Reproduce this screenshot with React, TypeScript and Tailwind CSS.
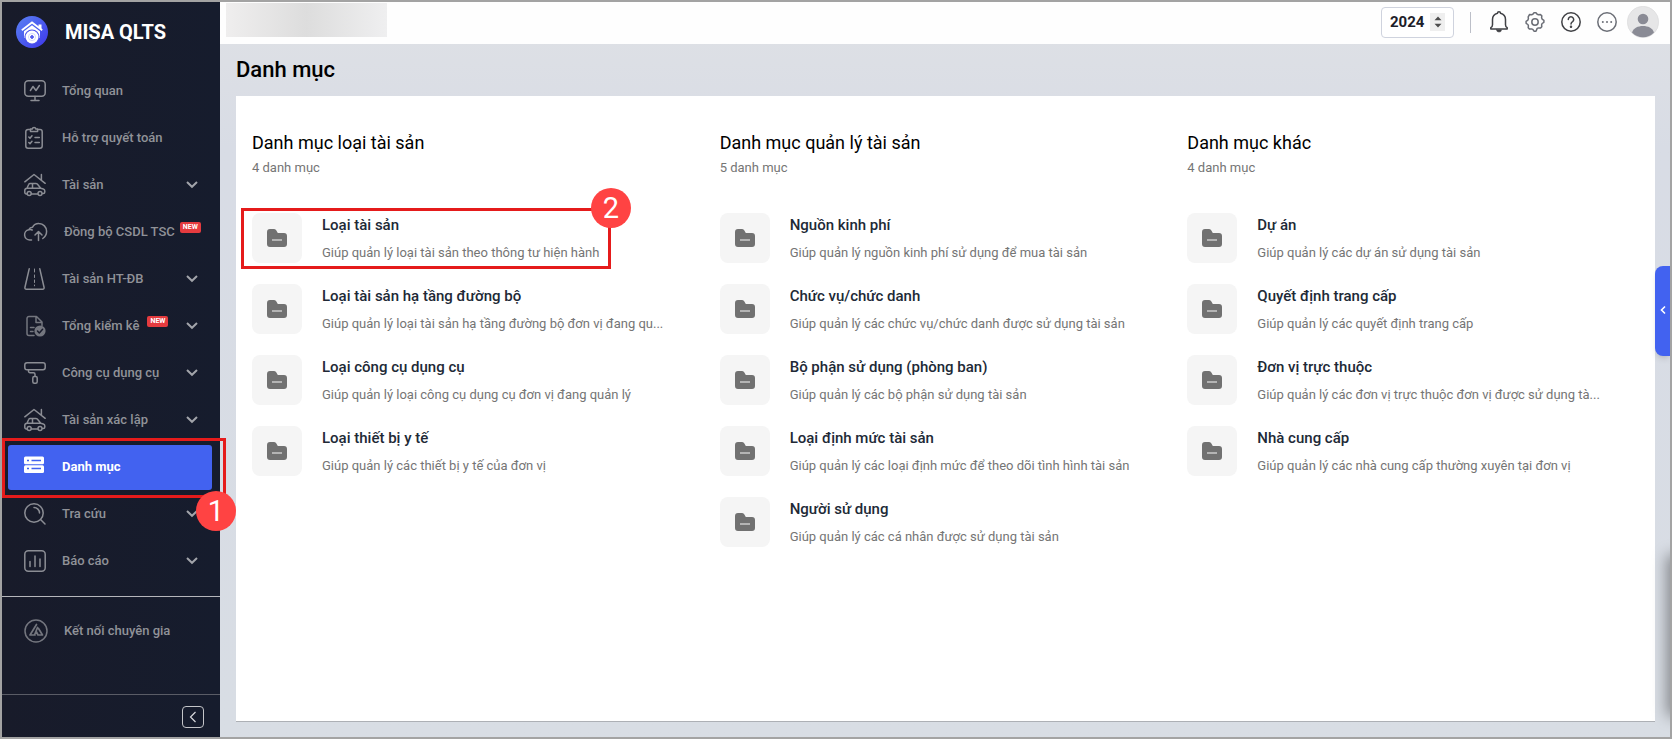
import { useState } from 'react';
import type { ReactNode } from 'react';

const strokeProps = {
    fill: 'none',
    stroke: 'currentColor',
    strokeWidth: 1.5,
    strokeLinecap: 'round' as const,
    strokeLinejoin: 'round' as const,
};

const MonitorIcon = () => (
    <svg viewBox="0 0 24 24" className="w-6 h-6" {...strokeProps}>
        <rect x="1.8" y="1.8" width="20.4" height="15.4" rx="3.5" />
        <path d="M12 17.5v3.6M8 21.4h8M7.4 11.5l2.6-4 3 4 3.4-5" />
    </svg>
);

const ClipboardIcon = () => (
    <svg viewBox="0 0 24 24" className="w-6 h-6" {...strokeProps}>
        <path d="M7.5 3.5H5A2.2 2.2 0 0 0 2.8 5.7V20A2.2 2.2 0 0 0 5 22.2h12A2.2 2.2 0 0 0 19.2 20V5.7A2.2 2.2 0 0 0 17 3.5h-2.5" />
        <path d="M7.5 5.5v-2.5h1.700a1.900 1.900 0 0 1 3.700 0h1.700v2.500z" />
        <path d="M5.800 11l1.200 1.200 2-2.400M5.800 16.500l1.200 1.200 2-2.400M12 11.500h4.300M12 16.500h4.300" />
    </svg>
);

const HouseCarIcon = () => (
    <svg viewBox="0 0 24 24" className="w-6 h-6" {...strokeProps}>
        <path d="M1.800 8.800L11 1.500l11.200 8.800M18.400 1.500v5.500" />
        <path d="M3.800 15.500l2-4.200a1.500 1.500 0 0 1 1.400-.9h5.600a2 2 0 0 1 1.500.7l3.500 4.200 2.500.6a2 2 0 0 1 1.500 2v1.200a1.500 1.500 0 0 1-1.500 1.500h-.6M3.800 21h-.5a1.500 1.500 0 0 1-1.500-1.500v-2.200a2 2 0 0 1 2-2h13.800M9.500 10.600v4.500M8.500 21h6" />
        <circle cx="6.200" cy="20.600" r="2" />
        <circle cx="17" cy="20.600" r="2" />
    </svg>
);

const CloudIcon = () => (
    <svg viewBox="0 0 26 26" className="w-[26px] h-[26px]" {...strokeProps}>
        <path d="M8.500 21H7a5.200 5.200 0 0 1-1.200-10.300 4.600 4.600 0 0 1 3.800-2.500A6.800 6.800 0 0 1 16 4.500a7.800 7.800 0 0 1 7.600 7.800c0 3.200-1.600 5.600-3.800 7.200M5.800 10.700a4 4 0 0 1 3.400.3" />
        <path d="M15.500 21.500v-8.500M12 16l3.500-3.500L19 16" />
    </svg>
);

const RoadIcon = () => (
    <svg viewBox="0 0 24 24" className="w-6 h-6" {...strokeProps}>
        <path d="M6.200 1.800L1.900 20.500a1.400 1.400 0 0 0 1.400 1.700h16.400a1.400 1.400 0 0 0 1.400-1.700L16.800 1.800" />
        <path d="M11.500 2v3M11.500 8v2.500M11.500 13v2.500M11.500 18v.800" strokeWidth="1" />
    </svg>
);

const FileCheckIcon = () => (
    <svg viewBox="0 0 24 24" className="w-6 h-6 opacity-80" {...strokeProps}>
        <path d="M11 21.500H6A2 2 0 0 1 4 19.500v-15A2 2 0 0 1 6 2.500h7.500L19 8v3.500M13 2.500V8.500h6M7.500 13.500h3.500M7.500 17.500h2.500" />
        <circle cx="17" cy="17" r="5.600" fill="currentColor" stroke="none" />
        <path d="M14.500 17l1.800 1.900 3.300-3.700" stroke="#181b2b" />
    </svg>
);

const RollerIcon = () => (
    <svg viewBox="0 0 24 24" className="w-6 h-6" {...strokeProps}>
        <rect x="1.800" y="1.800" width="20.400" height="7" rx="2.200" />
        <path d="M5.500 8.800v1.400a1.500 1.500 0 0 0 1.500 1.500h3.500a1.500 1.500 0 0 1 1.500 1.500v2" />
        <rect x="9.800" y="15.500" width="4.400" height="6.800" rx="1.500" />
    </svg>
);

const ServerIcon = () => (
    <svg viewBox="0 0 24 24" className="w-6 h-6">
        <rect x="1" y="1.500" width="20" height="7.800" rx="1.500" fill="#fff" />
        <rect x="1" y="10.300" width="20" height="7.800" rx="1.500" fill="#fff" />
        <path d="M4 5.500h2M8.500 5.500h9.500M4 13.500h2M8.500 13.500h9.500" stroke="#4262f0" strokeWidth="1.300" />
    </svg>
);

const LookupIcon = () => (
    <svg viewBox="0 0 24 24" className="w-6 h-6" {...strokeProps}>
        <circle cx="11" cy="11" r="9.200" />
        <path d="M17.800 17.800L22 22M11 5.500a5.500 5.500 0 0 1 5.500 5.500" />
    </svg>
);

const ReportIcon = () => (
    <svg viewBox="0 0 24 24" className="w-6 h-6" {...strokeProps}>
        <rect x="1.800" y="1.800" width="20.400" height="20.400" rx="3.500" />
        <path d="M7 12.500v5M12 7v10.500M17 10v7.500" />
    </svg>
);

const ExpertIcon = () => (
    <svg viewBox="0 0 26 26" className="w-[26px] h-[26px] opacity-80" {...strokeProps}>
        <circle cx="13" cy="13" r="11" />
        <path d="M13.500 6.500L7 17h5M14.500 9.500l-2.800 7M15.500 10.500l4 6.500h-4.500l-1.500-3" strokeWidth="1.700" />
    </svg>
);

const ChevronDown = () => (
    <svg viewBox="0 0 12 12" className="w-3 h-3 ml-auto" fill="none" stroke="#a2a4aa" strokeWidth="2">
        <path d="M1 3l5 4.800 5-4.800" />
    </svg>
);

const FolderIcon = () => (
    <svg viewBox="0 0 20 18" className="w-5 h-[18px]">
        <path d="M0 3a3 3 0 0 1 3-3h3.700a3 3 0 0 1 2.500 1.300L10.800 4H17a3 3 0 0 1 3 3v8a3 3 0 0 1-3 3H3a3 3 0 0 1-3-3z" fill="#717171" />
        <path d="M5 11h10" stroke="#b4b4b4" strokeWidth="2" />
    </svg>
);

const Logo = () => (
    <svg viewBox="0 0 32 32" className="w-8 h-8">
        <defs>
            <linearGradient id="logo-bg" x1="0" y1="0" x2="1" y2="1">
                <stop offset="0" stopColor="#5a82f4" />
                <stop offset="1" stopColor="#3d36ea" />
            </linearGradient>
        </defs>
        <circle cx="16" cy="16" r="16" fill="url(#logo-bg)" />
        <path d="M5.800 14.300L16 6.500l10.200 7.800" fill="none" stroke="#fff" strokeWidth="1.800" />
        <path d="M22.500 8.500h3v5l-3-2z" fill="#fff" />
        <path d="M8 15.300L16 9.300l8 6V22H8z" fill="#fff" />
        <circle cx="16" cy="21" r="7.600" fill="#4b52ee" />
        <circle cx="16" cy="21" r="6.500" fill="#fff" />
        <circle cx="16" cy="21" r="3.600" fill="none" stroke="#aab4f8" strokeWidth="0.500" />
        <path d="M16 19v4M14 21h4" stroke="#4b52ee" strokeWidth="1.600" />
    </svg>
);

type MenuItem = {
    label: string;
    icon: ReactNode;
    expand?: boolean;
    isNew?: boolean;
};

const menu: MenuItem[] = [
    { label: 'Tổng quan', icon: <MonitorIcon /> },
    { label: 'Hỗ trợ quyết toán', icon: <ClipboardIcon /> },
    { label: 'Tài sản', icon: <HouseCarIcon />, expand: true },
    { label: 'Đồng bộ CSDL TSC', icon: <CloudIcon />, isNew: true },
    { label: 'Tài sản HT-ĐB', icon: <RoadIcon />, expand: true },
    { label: 'Tổng kiểm kê', icon: <FileCheckIcon />, expand: true, isNew: true },
    { label: 'Công cụ dụng cụ', icon: <RollerIcon />, expand: true },
    { label: 'Tài sản xác lập', icon: <HouseCarIcon />, expand: true },
    { label: 'Danh mục', icon: <ServerIcon /> },
    { label: 'Tra cứu', icon: <LookupIcon />, expand: true },
    { label: 'Báo cáo', icon: <ReportIcon />, expand: true },
];

const groups = [
    {
        title: 'Danh mục loại tài sản',
        items: [
            { name: 'Loại tài sản', desc: 'Giúp quản lý loại tài sản theo thông tư hiện hành' },
            { name: 'Loại tài sản hạ tầng đường bộ', desc: 'Giúp quản lý loại tài sản hạ tầng đường bộ đơn vị đang qu...' },
            { name: 'Loại công cụ dụng cụ', desc: 'Giúp quản lý loại công cụ dụng cụ đơn vị đang quản lý' },
            { name: 'Loại thiết bị y tế', desc: 'Giúp quản lý các thiết bị y tế của đơn vị' },
        ],
    },
    {
        title: 'Danh mục quản lý tài sản',
        items: [
            { name: 'Nguồn kinh phí', desc: 'Giúp quản lý nguồn kinh phí sử dụng để mua tài sản' },
            { name: 'Chức vụ/chức danh', desc: 'Giúp quản lý các chức vụ/chức danh được sử dụng tài sản' },
            { name: 'Bộ phận sử dụng (phòng ban)', desc: 'Giúp quản lý các bộ phận sử dụng tài sản' },
            { name: 'Loại định mức tài sản', desc: 'Giúp quản lý các loại định mức để theo dõi tình hình tài sản' },
            { name: 'Người sử dụng', desc: 'Giúp quản lý các cá nhân được sử dụng tài sản' },
        ],
    },
    {
        title: 'Danh mục khác',
        items: [
            { name: 'Dự án', desc: 'Giúp quản lý các dự án sử dụng tài sản' },
            { name: 'Quyết định trang cấp', desc: 'Giúp quản lý các quyết định trang cấp' },
            { name: 'Đơn vị trực thuộc', desc: 'Giúp quản lý các đơn vị trực thuộc đơn vị được sử dụng tà...' },
            { name: 'Nhà cung cấp', desc: 'Giúp quản lý các nhà cung cấp thường xuyên tại đơn vị' },
        ],
    },
];

const StepBadge = ({ step, className }: { step: number; className: string }) => (
    <span className={`absolute z-10 flex w-10 h-10 items-center justify-center rounded-full bg-[#ff4343] text-[29px] leading-none font-normal text-white ${className}`}>
        {step}
    </span>
);

function Sidebar() {
    const [active, setActive] = useState('Danh mục');

    return (
        <aside className="relative z-10 flex w-[218px] shrink-0 flex-col bg-linear-to-r from-[#181b2a] to-[#161c2d] text-[13px] font-medium text-[#909298]">
            <div className="flex h-[60px] items-center pl-[14px]">
                <Logo />
                <span className="ml-[17px] text-xl font-bold text-white">MISA QLTS</span>
            </div>
            <ul className="pt-[6px] pb-[11px]">
                {menu.map((m) => (
                    <li key={m.label} className="relative h-[47px] pt-px pb-px pl-[6px] pr-2">
                        <button
                            onClick={() => setActive(m.label)}
                            className={`flex h-full w-full items-center rounded-[3px] pl-[15px] pr-[14px] pb-px ${active === m.label ? 'bg-[#4262f0] font-bold text-white' : ''}`}
                        >
                            <span className="text-[#8b8d94]">{m.icon}</span>
                            <span className="ml-[15px] whitespace-nowrap">{m.label}</span>
                            {m.isNew && (
                                <span className={`mt-3 flex h-[11px] w-[21px] shrink-0 items-center justify-center self-start rounded-[2px] bg-[#e53b3f] text-[7px] font-bold text-white ${m.expand ? 'ml-2' : 'ml-[5px]'}`}>
                                    NEW
                                </span>
                            )}
                            {m.expand && <ChevronDown />}
                        </button>
                        {m.label === 'Danh mục' && (
                            <>
                                <span className="pointer-events-none absolute -top-[6px] -right-[6px] -bottom-[7px] left-0 border-[3px] border-[#e51b1b]" />
                                <StepBadge step={1} className="-right-4 -bottom-10" />
                            </>
                        )}
                    </li>
                ))}
            </ul>
            <div className="border-t border-[#b5b6bb] pt-[10px]">
                <button className="flex h-[47px] w-full items-center pl-[21px]">
                    <span className="text-[#8b8d94]"><ExpertIcon /></span>
                    <span className="ml-[15px]">Kết nối chuyên gia</span>
                </button>
            </div>
            <div className="mt-auto flex h-[43px] items-center justify-end border-t border-[#5a5c66] pt-[2px] pr-4">
                <button aria-label="Thu gọn" className="flex w-[22px] h-[22px] items-center justify-center rounded-[4px] border border-[#c4c5c9] text-[#d8d8dc]">
                    <svg viewBox="0 0 10 12" className="w-[10px] h-3" fill="none" stroke="currentColor" strokeWidth="1.200">
                        <path d="M7.500 1L2.500 6l5 5" />
                    </svg>
                </button>
            </div>
        </aside>
    );
}

function Header() {
    const [year, setYear] = useState('2024');

    return (
        <header className="flex h-[42px] items-center bg-[#fefefe] pb-[2px] pl-[6px] pr-[11px]">
            <div className="mb-1 h-[34px] w-[161px] bg-linear-to-r from-[#efeeee] via-[#dddddd] to-[#efeff0]" />
            <div className="ml-auto flex h-[31px] w-[73px] items-center rounded-[4px] border border-[#cfd3de] bg-white pl-2 pr-2">
                <input
                    aria-label="Năm"
                    value={year}
                    onChange={(e) => setYear(e.target.value)}
                    className="w-10 text-[15px] font-bold text-[#1c2029] outline-none"
                />
                <span className="flex h-[18px] w-[15px] shrink-0 items-center justify-center bg-[#efefef]">
                    <svg viewBox="0 0 8 12" className="w-2 h-3" fill="#4d4d4d">
                        <path d="M0.500 4.300L4 0.500l3.500 3.800zM0.500 7.700L4 11.500l3.500-3.800z" />
                    </svg>
                </span>
            </div>
            <div className="ml-4 h-[21px] w-px bg-[#bcbfc8]" />
            <div className="ml-4 flex items-center gap-3 text-[#6b6e76]">
                <button aria-label="Thông báo" className="text-[#404145]">
                    <svg viewBox="0 0 24 24" className="w-6 h-6" {...strokeProps}>
                        <path d="M3.800 19h16.400v-1.300c-1.300-.7-1.700-1.700-1.700-3V9.500a6.500 6.500 0 0 0-5-6.300 1.500 1.500 0 0 0-3 0 6.500 6.500 0 0 0-5 6.300v5.200c0 1.300-.4 2.300-1.700 3z" />
                        <path d="M9.500 19.800h5a2.500 2.300 0 0 1-5 0z" fill="currentColor" strokeWidth="0.500" />
                    </svg>
                </button>
                <button aria-label="Thiết lập">
                    <svg viewBox="0 0 24 24" className="w-6 h-6" {...strokeProps}>
                        <path d="M9.800 4.300L11 2.800h2l1.200 1.500 1.300.5 1.900-.3 1.400 1.400-.2 1.900.5 1.300 1.800 1.200v2l-1.800 1.200-.5 1.300.2 1.900-1.400 1.400-1.900-.2-1.300.5L13 21.200h-2l-1.200-1.800-1.300-.5-1.900.2-1.400-1.400.2-1.900-.5-1.300-1.800-1.200v-2l1.800-1.200.5-1.300-.2-1.900L6.600 4.500l1.900.3z" />
                        <circle cx="12" cy="12" r="3.200" />
                    </svg>
                </button>
                <button aria-label="Trợ giúp" className="text-[#404145]">
                    <svg viewBox="0 0 24 24" className="w-6 h-6" {...strokeProps}>
                        <circle cx="12" cy="12" r="9.200" />
                        <path d="M9.300 9.500a2.700 2.700 0 1 1 4.300 2.200c-1 .7-1.600 1.200-1.600 2.300" />
                        <circle cx="12" cy="16.800" r="0.500" fill="currentColor" />
                    </svg>
                </button>
                <button aria-label="Thêm">
                    <svg viewBox="0 0 24 24" className="w-6 h-6" {...strokeProps}>
                        <circle cx="12" cy="12" r="9.200" />
                        <g fill="currentColor" stroke="none">
                            <circle cx="7.800" cy="12" r="1" />
                            <circle cx="12" cy="12" r="1" />
                            <circle cx="16.200" cy="12" r="1" />
                        </g>
                    </svg>
                </button>
            </div>
            <button aria-label="Tài khoản" className="ml-2">
                <svg viewBox="0 0 32 32" className="w-8 h-8">
                    <circle cx="16" cy="16" r="15.700" fill="#e6e6e7" stroke="#d8d8da" strokeWidth="0.600" />
                    <circle cx="16" cy="13" r="5.300" fill="#8a8b95" />
                    <path d="M5 26.500C6.500 22 11 20 16 20s9.500 2 11 6.500A15.300 15.300 0 0 1 16 31.300 15.300 15.300 0 0 1 5 26.500z" fill="#8a8b95" />
                </svg>
            </button>
        </header>
    );
}

export default function App() {
    return (
        <div className="flex min-h-screen border-2 border-[#a3a3a3] font-['Roboto',sans-serif]">
            <Sidebar />
            <div className="relative flex min-w-0 flex-1 flex-col overflow-hidden bg-linear-to-b from-[#dfe1e5] via-[#d8dce5] via-20% to-[#d8dde4]">
                <Header />
                <main className="flex flex-1 flex-col pl-4 pr-[15px] pb-[15px]">
                    <h1 className="flex h-[52px] items-center pb-[2px] text-[22px] font-medium text-black">Danh mục</h1>
                    <div className="grid flex-1 grid-cols-3 border-b border-[#adb0b5] bg-white pt-[34px] pl-4">
                        {groups.map((g, gi) => (
                            <section key={g.title} className="min-w-0">
                                <h2 className="text-lg leading-[26px] text-black">{g.title}</h2>
                                <p className="text-[13px] leading-6 text-[#757575]">{g.items.length} danh mục</p>
                                <ul className="mt-[33px]">
                                    {g.items.map((item, i) => (
                                        <li key={item.name} className="relative h-[71px] pr-10">
                                            <a href="#" className="flex">
                                                <span className="flex h-[50px] w-[50px] shrink-0 items-center justify-center rounded-lg bg-[#f5f5f5]">
                                                    <FolderIcon />
                                                </span>
                                                <span className="ml-5 min-w-0 flex-1">
                                                    <span className="block truncate text-[15px] leading-6 font-medium text-[#212936]">{item.name}</span>
                                                    <span className="mt-1 block truncate text-[13px] leading-6 text-[#757575]">{item.desc}</span>
                                                </span>
                                            </a>
                                            {gi === 0 && i === 0 && (
                                                <>
                                                    <span className="pointer-events-none absolute -top-[5px] -left-[11px] h-[61px] w-[370px] border-[3px] border-[#e51b1b]" />
                                                    <StepBadge step={2} className="-top-[25px] left-[339px]" />
                                                </>
                                            )}
                                        </li>
                                    ))}
                                </ul>
                            </section>
                        ))}
                    </div>
                </main>
                <button aria-label="Mở rộng" className="absolute top-[264px] right-0 flex h-[90px] w-[15px] items-center justify-center rounded-l-lg bg-[#4262f0] pb-[2px] text-white shadow-md">
                    <svg viewBox="0 0 6 10" className="w-[6px] h-[10px]" fill="none" stroke="currentColor" strokeWidth="1.600">
                        <path d="M5 1.500L1.500 5 5 8.500" />
                    </svg>
                </button>
                <div className="absolute -right-10 bottom-6 h-[155px] w-10 shadow-[0_0_14px_3px_rgba(0,0,0,0.4)]" />
            </div>
        </div>
    );
}
